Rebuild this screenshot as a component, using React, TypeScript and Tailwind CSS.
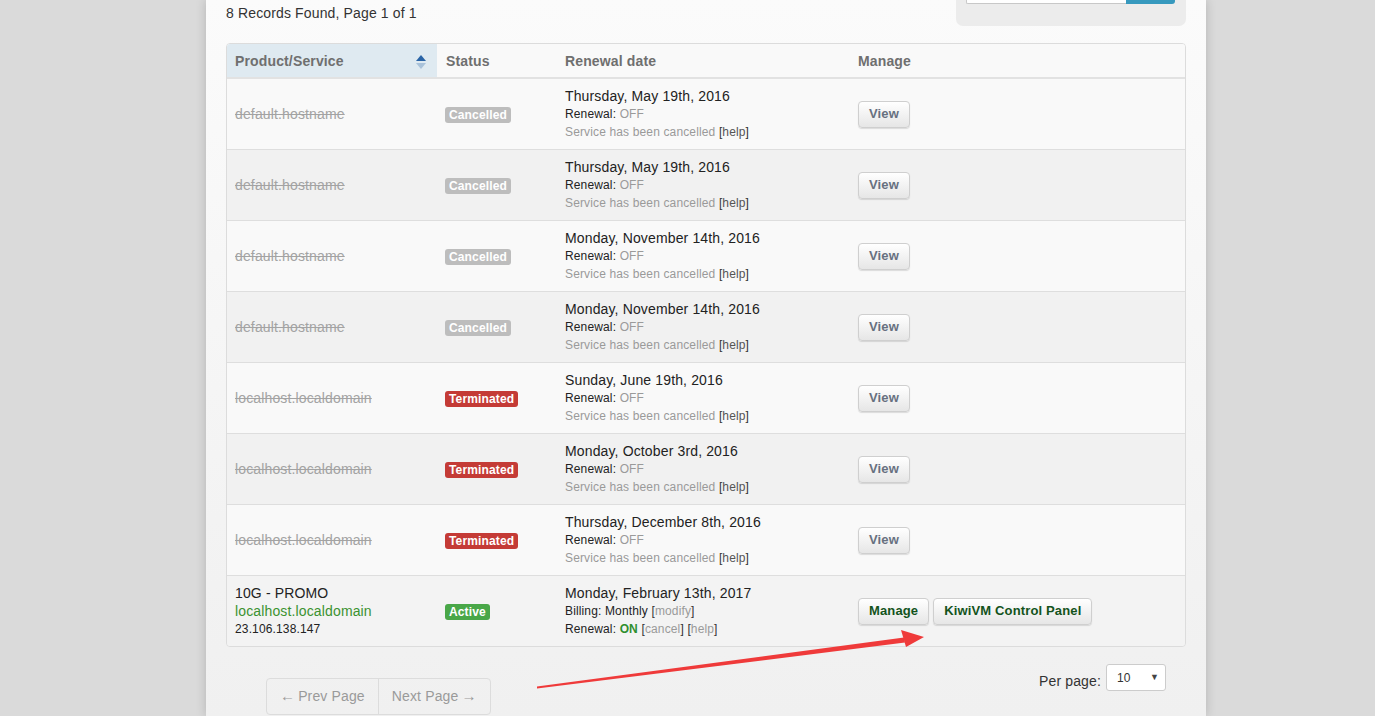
import React from "react";

type Row = {
  host: string;
  status: "Cancelled" | "Terminated";
  date: string;
};

const ROWS: Row[] = [
  { host: "default.hostname", status: "Cancelled", date: "Thursday, May 19th, 2016" },
  { host: "default.hostname", status: "Cancelled", date: "Thursday, May 19th, 2016" },
  { host: "default.hostname", status: "Cancelled", date: "Monday, November 14th, 2016" },
  { host: "default.hostname", status: "Cancelled", date: "Monday, November 14th, 2016" },
  { host: "localhost.localdomain", status: "Terminated", date: "Sunday, June 19th, 2016" },
  { host: "localhost.localdomain", status: "Terminated", date: "Monday, October 3rd, 2016" },
  { host: "localhost.localdomain", status: "Terminated", date: "Thursday, December 8th, 2016" },
];

const btn =
  "inline-flex h-[27px] items-center rounded-[4px] border border-[#cfcfcf] bg-gradient-to-b from-white to-[#e6e6e6] px-[10px] text-[13px] font-bold shadow-[0_1px_1px_rgba(0,0,0,0.12)]";

const SortIcon = () => (
  <svg width="12" height="16" viewBox="0 0 12 16">
    <polygon points="6,1 11,7 1,7" fill="#2a64a6" />
    <polygon points="1,9 11,9 6,15" fill="#a9c2da" />
  </svg>
);

const Help = () => (
  <span className="text-[#333]">
    [<span className="text-[#555]">help</span>]
  </span>
);

const App = () => {
  return (
    <div className="relative min-h-[716px] overflow-hidden bg-[#dadada] font-['Liberation_Sans',Arial,sans-serif] tracking-[0.14px]">
      <div className="ml-[206px] min-h-[716px] w-[1000px] bg-gradient-to-b from-[#fbfbfb] to-[#f0f0f0] px-5 shadow-[0_0_10px_rgba(0,0,0,0.18)]">
        {/* top bar */}
        <div className="flex h-[43px] items-start justify-between">
          <div className="pt-[4px] text-[14px] leading-[18px] text-[#333]">
            8 Records Found, Page 1 of 1
          </div>
          <div className="h-[26px] w-[230px] rounded-b-[7px] bg-[#ececec] px-[10px]">
            <div className="flex h-[4px]">
              <div className="w-[160px] rounded-bl-[2px] border-b border-l border-[#c8c8c8] bg-white" />
              <div className="w-[49px] rounded-br-[3px] bg-[#3799be]" />
            </div>
          </div>
        </div>

        {/* table */}
        <div className="overflow-hidden rounded-[4px] border border-[#dcdcdc]">
          <table className="w-full border-collapse text-left">
            <thead>
              <tr className="h-[34px] border-b-2 border-[#e2e2e2] bg-[#f9f9f9] text-[14px] font-bold text-[#6f6f6f]">
                <th className="w-[210px] bg-[#dfeaf1] px-2 pt-[2px]">
                  <div className="flex items-center justify-between">
                    <span>Product/Service</span>
                    <span className="mr-[2px]">
                      <SortIcon />
                    </span>
                  </div>
                </th>
                <th className="w-[120px] px-[9px] pt-[2px]">Status</th>
                <th className="w-[293px] px-2 pt-[2px]">Renewal date</th>
                <th className="px-2 pt-[2px]">Manage</th>
              </tr>
            </thead>
            <tbody>
              {ROWS.map((r, i) => (
                <tr
                  key={i}
                  className={`border-b border-[#dedede] ${i % 2 === 0 ? "bg-[#f9f9f9]" : "bg-[#f1f1f1]"}`}
                >
                  <td className="px-2 text-[14px] text-[#a3a3a3] line-through">{r.host}</td>
                  <td className="px-2">
                    <span
                      className={`rounded-[3px] px-[4px] py-[1px] text-[12px] font-bold leading-[13px] text-white ${
                        r.status === "Cancelled" ? "bg-[#bdbdbd]" : "bg-[#c43b36]"
                      }`}
                    >
                      {r.status}
                    </span>
                  </td>
                  <td className="px-2 py-2 leading-[18px]">
                    <div className="text-[14px] text-[#222]">{r.date}</div>
                    <div className="text-[12px] text-[#222]">
                      Renewal: <span className="text-[#9a9a9a]">OFF</span>
                    </div>
                    <div className="text-[12px] text-[#9a9a9a]">
                      Service has been cancelled <Help />
                    </div>
                  </td>
                  <td className="px-2">
                    <span className={`${btn} text-[#677080]`}>View</span>
                  </td>
                </tr>
              ))}
              <tr className="bg-[#f3f3f3]">
                <td className="px-2 py-2 leading-[18px]">
                  <div className="text-[14px] text-[#222]">10G - PROMO</div>
                  <div className="text-[14px] text-[#3b9230]">localhost.localdomain</div>
                  <div className="text-[12px] text-[#222]">23.106.138.147</div>
                </td>
                <td className="px-2">
                  <span className="rounded-[3px] bg-[#49a748] px-[4px] py-[1px] text-[12px] font-bold leading-[13px] text-white">
                    Active
                  </span>
                </td>
                <td className="px-2 py-2 leading-[18px]">
                  <div className="text-[14px] text-[#222]">Monday, February 13th, 2017</div>
                  <div className="text-[12px] text-[#222]">
                    Billing: Monthly <span className="text-[#333]">[</span>
                    <span className="text-[#9a9a9a]">modify</span>
                    <span className="text-[#333]">]</span>
                  </div>
                  <div className="text-[12px] text-[#222]">
                    Renewal: <span className="font-bold text-[#2f8f2f]">ON</span>{" "}
                    <span className="text-[#333]">[</span>
                    <span className="text-[#9a9a9a]">cancel</span>
                    <span className="text-[#333]">]</span>{" "}
                    <span className="text-[#333]">[</span>
                    <span className="text-[#9a9a9a]">help</span>
                    <span className="text-[#333]">]</span>
                  </div>
                </td>
                <td className="px-2">
                  <div className="flex gap-[4px]">
                    <span className={`${btn} text-[#13531c]`}>Manage</span>
                    <span className={`${btn} text-[#13531c]`}>KiwiVM Control Panel</span>
                  </div>
                </td>
              </tr>
            </tbody>
          </table>
        </div>

        {/* footer */}
        <div className="mt-[17px] flex items-start justify-between">
          <div className="ml-[40px] mt-[14px] flex h-[37px] overflow-hidden rounded-[4px] border border-[#dcdcdc] text-[14px] text-[#9a9a9a]">
            <span className="flex items-center border-r border-[#dcdcdc] px-[13px]">
              <span className="mr-[3px] text-[15px]">←</span>Prev Page
            </span>
            <span className="flex items-center px-[13px]">
              Next Page<span className="ml-[3px] text-[15px]">→</span>
            </span>
          </div>
          <div className="mr-[20px] flex items-start gap-[5px]">
            <span className="pt-[8px] text-[14px] leading-[18px] text-[#333]">Per page:</span>
            <div className="flex h-[27px] w-[60px] items-center justify-between rounded-[3px] border border-[#ccc] bg-white pl-[10px] pr-[6px] text-[12px] text-[#333]">
              <span>10</span>
              <span className="text-[9px] text-[#444]">▼</span>
            </div>
          </div>
        </div>
      </div>

      {/* red annotation arrow */}
      <svg className="pointer-events-none absolute left-0 top-0" width="1375" height="716">
        <polygon points="537,686.5 904,637.5 905,642.5 537,688.5" fill="#ef3a3a" />
        <polygon points="901,630 924,637 906,647" fill="#ef3a3a" />
      </svg>
    </div>
  );
};

export default App;
